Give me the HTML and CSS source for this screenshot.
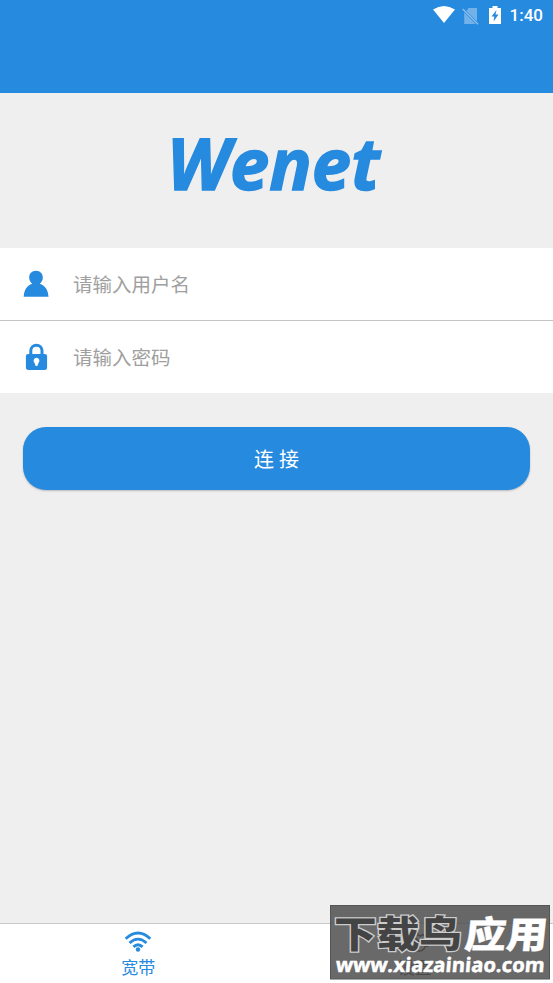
FILE: index.html
```html
<!DOCTYPE html>
<html lang="zh-CN">
<head>
<meta charset="utf-8">
<title>Wenet</title>
<link rel="stylesheet" href="styles.css">
</head>
<body>
<div class="screen">
  <header class="bar">
    <div class="status">
      <svg class="s-wifi" width="22" height="17" viewBox="0 0 22 17"><path d="M0 3.6Q11-3.6 22 3.6L11 17Z" fill="#fff"/></svg>
      <svg class="s-sim" width="17" height="18" viewBox="0 0 17 18"><path d="M6.500 1H15v13.500L4.500 4ZM2.200 5.200L13.800 17H2.200Z" fill="#73b1e9"/><path d="M.8 2L16 17.200" stroke="#8fc1ee" stroke-width="1.300"/></svg>
      <svg class="s-bat" width="12" height="18" viewBox="0 0 12 18"><path d="M3.500 0h5v2H12v16H0V2h3.500Z" fill="#fff"/><path d="M7.500 4L2.500 10.500H5.300L4.500 15.500 9.500 8.500H6.500Z" fill="#268adf"/></svg>
      <span class="clock">1:40</span>
    </div>
  </header>
  <main class="main">
    <svg class="logo" width="553" height="154" viewBox="0 0 553 154"><text x="167" y="96.500" textLength="213" lengthAdjust="spacingAndGlyphs">Wenet</text></svg>
    <form class="form">
      <label class="field">
        <svg width="26" height="28" viewBox="0 0 26 28"><path d="M13 .8c4 0 6.800 2.800 6.800 6.700 0 2.700-1.200 4.700-3 6.200 5 1.400 8.500 6.300 8.700 13.100H.7C.9 20 4.200 15.100 9.200 13.700 7.400 12.200 6.200 10.200 6.200 7.500 6.200 3.600 9 .8 13 .8Z"/></svg>
        <span>请输入用户名</span>
      </label>
      <label class="field">
        <svg width="26" height="28" viewBox="0 0 26 28"><path fill-rule="evenodd" d="M6.300 11V7.800a7.100 7.100 0 0 1 14.200 0V11h1.300q2.300 0 2.300 2.300v11q0 2.700-2.500 2.700H5.400q-2.500 0-2.500-2.700v-11Q2.900 11 5.200 11ZM9.300 11h8.200V7.800a4.100 4.100 0 0 0-8.200 0ZM13.500 14.800a2.900 2.900 0 0 0-2.200 4.800l1.400 3.500h1.600l1.400-3.500A2.900 2.900 0 0 0 13.500 14.800Z"/></svg>
        <span>请输入密码</span>
      </label>
    </form>
    <div class="btn">连 接</div>
  </main>
  <nav class="tabs">
    <div class="tab">
      <svg width="28" height="22" viewBox="0 0 28 22"><g fill="none" stroke="#268adf" stroke-width="2.800"><path d="M1.700 7.700q12.300-11.300 24.600 0M5.500 12q8.500-7.800 17 0M9.400 15.900q4.600-4.200 9.200 0"/></g><circle cx="14" cy="18.500" r="2.200" fill="#268adf"/></svg>
      <span>宽带</span>
    </div>
    <div class="tab off">
      <svg width="28" height="22" viewBox="0 0 28 22"><g fill="none" stroke="#222" stroke-width="1.600"><path d="M12 1h4l.8 3 2.500 1 2.700-1.500 2.500 2.800-1.500 2.700.8 2 3 1v3l-3 .8-.8 2-2.500 2-3 .2h-5l-4.500-2-.8-2.200-3-.8v-3l3-1 .8-2L3.500 6.300 6 3.500 8.700 5l2.500-1Z"/><circle cx="14" cy="11" r="3.500"/></g></svg>
      <span>设置</span>
    </div>
  </nav>
  <svg class="mark" width="220" height="75" viewBox="0 0 220 75">
    <rect x=".5" y=".5" width="219" height="73.500" fill="#505050" fill-opacity=".86" stroke="#555"/>
    <text class="m1 dark" x="4" y="43" textLength="128" lengthAdjust="spacingAndGlyphs">下载鸟</text>
    <text class="m1 slant" x="133" y="43" textLength="83" lengthAdjust="spacingAndGlyphs">应用</text>
    <text class="m2" x="6" y="67" textLength="209" lengthAdjust="spacingAndGlyphs">www.xiazainiao.com</text>
  </svg>
</div>
</body>
</html>
```
FILE: styles.css
```css
* { box-sizing: border-box; }
body { margin: 0; background: #efefef; font-family: Roboto, "Noto Sans CJK SC", sans-serif; }
.screen { position: relative; width: 553px; height: 983px; display: flex; flex-direction: column; overflow: hidden; }
.bar { height: 93px; background: #268adf; }
.status { height: 31px; display: flex; justify-content: flex-end; align-items: center; padding-right: 10px; color: #fff; }
.s-wifi { margin-right: 7px; margin-top: -2px; }
.s-sim { margin-right: 10px; }
.s-bat { margin-right: 9px; margin-top: -1px; }
.clock { font-size: 17px; line-height: 31px; font-weight: 500; }
.main { flex: 1; display: flex; flex-direction: column; }
.logo { display: block; height: 154px; flex: none; }
.logo text { font: italic 700 72px "Open Sans", sans-serif; fill: #268adf; stroke: #268adf; stroke-width: 1.500px; }
.form { background: #fff; margin-top: 1px; height: 145px; }
.field { height: 72px; display: flex; align-items: center; padding-left: 23px; gap: 24px; color: #a0a0a0; font-size: 19.500px; }
.field span { padding-bottom: 2px; }
.field + .field { height: 73px; border-top: 1px solid #c4c4c4; }
.field svg { fill: #268adf; }
.btn { margin: 34px 23px 0; height: 63px; border-radius: 23px; background: #268adf; color: #fff; font-size: 20px; line-height: 63px; padding-top: 2px; text-align: center; box-shadow: 0 1px 2px rgba(0,0,0,.22); }
.tabs { height: 60px; background: #fff; border-top: 1px solid #c8c8c8; display: flex; }
.tab { flex: 1; display: flex; flex-direction: column; align-items: center; gap: 3px; padding-top: 7px; color: #268adf; font-size: 17px; line-height: 24px; }
.tab svg { flex: none; }
.off { color: #222; }
.mark { position: absolute; left: 330px; top: 905px; }
.mark text { fill: #fff; }
.mark .m1 { font: 900 37px "Noto Sans CJK SC", sans-serif; stroke: #fff; stroke-width: .3px; }
.mark .dark { fill: #444; stroke: #ccc; stroke-width: 2.500px; paint-order: stroke; }
.mark .slant { transform: translateX(5px) skewX(-6deg); }
.mark .m2 { font: 700 20px "Open Sans", sans-serif; stroke: #fff; stroke-width: .5px; transform: translateX(5px) skewX(-5deg); }
```
